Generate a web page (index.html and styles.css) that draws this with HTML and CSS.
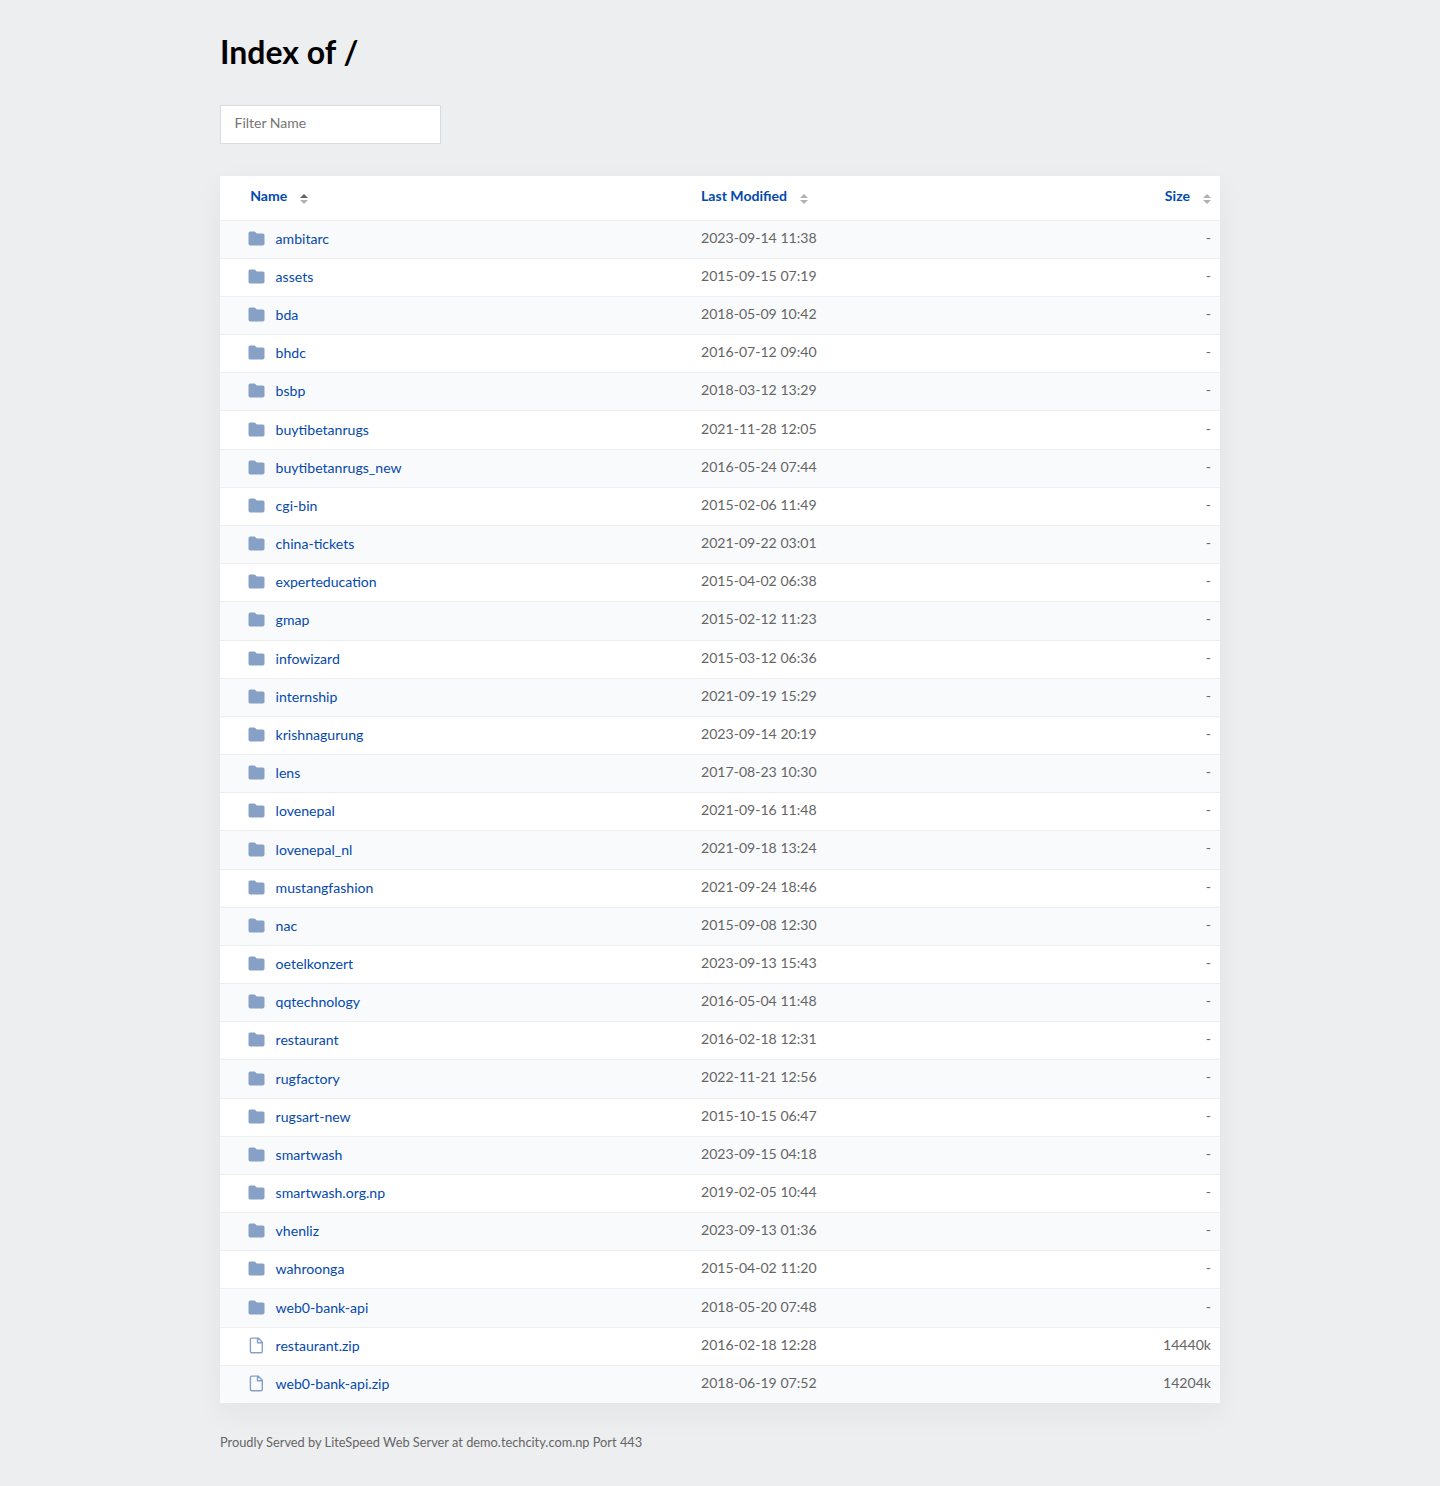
FILE: index.html
```html
<!DOCTYPE html>
<html lang="en">
<head>
<meta charset="utf-8">
<title>Index of /</title>
<link rel="stylesheet" href="styles.css">
</head>
<body>
<svg class="sprite" width="0" height="0" aria-hidden="true">
  <symbol id="folder" viewBox="0 -.4 17 17"><path d="M2.2 1h4.1q.6 0 1 .5l.9 1.1q.3.4.9.4h5.700q1.700 0 1.700 1.700v8.600q0 1.700-1.700 1.700H2.200Q.5 15 .5 13.300V2.700Q.5 1 2.200 1z" fill="#86a0c6"/></symbol>
  <symbol id="file" viewBox="0 -.4 17 17"><path d="M3.900.7h6.300l4.100 4.100v9q0 1.500-1.500 1.500H3.900q-1.500 0-1.500-1.500V2.200Q2.400.7 3.900.7zM9.500.9v4.500h4.600" fill="none" stroke="#86a0c6" stroke-width="1.400" stroke-linejoin="round"/></symbol>
  <symbol id="sort" viewBox="0 0 8 10"><path d="M0 4 4 0l4 4z"/><path d="M0 6h8l-4 4z"/></symbol>
  <symbol id="sort-asc" viewBox="0 0 8 10"><path d="M0 4 4 0l4 4z" fill="#636363"/><path d="M0 6h8l-4 4z" fill="#b1b1b1"/></symbol>
</svg>
<main class="content">
  <h1>Index of /</h1>
  <input class="filter" type="text" placeholder="Filter Name" aria-label="Filter Name">
  <table class="listing">
    <thead>
      <tr><th class="name">Name<svg class="sort"><use href="#sort-asc"/></svg></th><th class="date">Last Modified<svg class="sort"><use href="#sort"/></svg></th><th class="size">Size<svg class="sort"><use href="#sort"/></svg></th></tr>
    </thead>
    <tbody>
      <tr><td class="name"><svg class="icon"><use href="#folder"/></svg><a>ambitarc</a></td><td>2023-09-14 11:38</td><td class="size">-</td></tr>
      <tr><td class="name"><svg class="icon"><use href="#folder"/></svg><a>assets</a></td><td>2015-09-15 07:19</td><td class="size">-</td></tr>
      <tr><td class="name"><svg class="icon"><use href="#folder"/></svg><a>bda</a></td><td>2018-05-09 10:42</td><td class="size">-</td></tr>
      <tr><td class="name"><svg class="icon"><use href="#folder"/></svg><a>bhdc</a></td><td>2016-07-12 09:40</td><td class="size">-</td></tr>
      <tr><td class="name"><svg class="icon"><use href="#folder"/></svg><a>bsbp</a></td><td>2018-03-12 13:29</td><td class="size">-</td></tr>
      <tr><td class="name"><svg class="icon"><use href="#folder"/></svg><a>buytibetanrugs</a></td><td>2021-11-28 12:05</td><td class="size">-</td></tr>
      <tr><td class="name"><svg class="icon"><use href="#folder"/></svg><a>buytibetanrugs_new</a></td><td>2016-05-24 07:44</td><td class="size">-</td></tr>
      <tr><td class="name"><svg class="icon"><use href="#folder"/></svg><a>cgi-bin</a></td><td>2015-02-06 11:49</td><td class="size">-</td></tr>
      <tr><td class="name"><svg class="icon"><use href="#folder"/></svg><a>china-tickets</a></td><td>2021-09-22 03:01</td><td class="size">-</td></tr>
      <tr><td class="name"><svg class="icon"><use href="#folder"/></svg><a>experteducation</a></td><td>2015-04-02 06:38</td><td class="size">-</td></tr>
      <tr><td class="name"><svg class="icon"><use href="#folder"/></svg><a>gmap</a></td><td>2015-02-12 11:23</td><td class="size">-</td></tr>
      <tr><td class="name"><svg class="icon"><use href="#folder"/></svg><a>infowizard</a></td><td>2015-03-12 06:36</td><td class="size">-</td></tr>
      <tr><td class="name"><svg class="icon"><use href="#folder"/></svg><a>internship</a></td><td>2021-09-19 15:29</td><td class="size">-</td></tr>
      <tr><td class="name"><svg class="icon"><use href="#folder"/></svg><a>krishnagurung</a></td><td>2023-09-14 20:19</td><td class="size">-</td></tr>
      <tr><td class="name"><svg class="icon"><use href="#folder"/></svg><a>lens</a></td><td>2017-08-23 10:30</td><td class="size">-</td></tr>
      <tr><td class="name"><svg class="icon"><use href="#folder"/></svg><a>lovenepal</a></td><td>2021-09-16 11:48</td><td class="size">-</td></tr>
      <tr><td class="name"><svg class="icon"><use href="#folder"/></svg><a>lovenepal_nl</a></td><td>2021-09-18 13:24</td><td class="size">-</td></tr>
      <tr><td class="name"><svg class="icon"><use href="#folder"/></svg><a>mustangfashion</a></td><td>2021-09-24 18:46</td><td class="size">-</td></tr>
      <tr><td class="name"><svg class="icon"><use href="#folder"/></svg><a>nac</a></td><td>2015-09-08 12:30</td><td class="size">-</td></tr>
      <tr><td class="name"><svg class="icon"><use href="#folder"/></svg><a>oetelkonzert</a></td><td>2023-09-13 15:43</td><td class="size">-</td></tr>
      <tr><td class="name"><svg class="icon"><use href="#folder"/></svg><a>qqtechnology</a></td><td>2016-05-04 11:48</td><td class="size">-</td></tr>
      <tr><td class="name"><svg class="icon"><use href="#folder"/></svg><a>restaurant</a></td><td>2016-02-18 12:31</td><td class="size">-</td></tr>
      <tr><td class="name"><svg class="icon"><use href="#folder"/></svg><a>rugfactory</a></td><td>2022-11-21 12:56</td><td class="size">-</td></tr>
      <tr><td class="name"><svg class="icon"><use href="#folder"/></svg><a>rugsart-new</a></td><td>2015-10-15 06:47</td><td class="size">-</td></tr>
      <tr><td class="name"><svg class="icon"><use href="#folder"/></svg><a>smartwash</a></td><td>2023-09-15 04:18</td><td class="size">-</td></tr>
      <tr><td class="name"><svg class="icon"><use href="#folder"/></svg><a>smartwash.org.np</a></td><td>2019-02-05 10:44</td><td class="size">-</td></tr>
      <tr><td class="name"><svg class="icon"><use href="#folder"/></svg><a>vhenliz</a></td><td>2023-09-13 01:36</td><td class="size">-</td></tr>
      <tr><td class="name"><svg class="icon"><use href="#folder"/></svg><a>wahroonga</a></td><td>2015-04-02 11:20</td><td class="size">-</td></tr>
      <tr><td class="name"><svg class="icon"><use href="#folder"/></svg><a>web0-bank-api</a></td><td>2018-05-20 07:48</td><td class="size">-</td></tr>
      <tr><td class="name"><svg class="icon"><use href="#file"/></svg><a>restaurant.zip</a></td><td>2016-02-18 12:28</td><td class="size">14440k</td></tr>
      <tr><td class="name"><svg class="icon"><use href="#file"/></svg><a>web0-bank-api.zip</a></td><td>2018-06-19 07:52</td><td class="size">14204k</td></tr>
    </tbody>
  </table>
  <footer>Proudly Served by LiteSpeed Web Server at demo.techcity.com.np Port 443</footer>
</main>
</body>
</html>
```

FILE: styles.css
```css
* { box-sizing: border-box; }
body {
  margin: 0;
  background: #edeef0;
  color: #656565;
  font: 14.08px/20px Lato, "Liberation Sans", sans-serif;
}
.sprite { display: block; height: 0; }
.content {
  width: 1000px;
  min-height: 1486px;
  margin: 0 auto;
  padding-top: 32px;
}
h1 {
  margin: 0 0 33px;
  color: #000;
  font-size: 32px;
  line-height: 40px;
  font-weight: 700;
}
.filter {
  display: block;
  width: 221px;
  height: 39px;
  margin: 0 0 31.625px;
  padding: 7px 13.5px 12px;
  border: 1px solid #d9dbde;
  background: #fff;
  font: inherit;
  font-size: 14px;
}
.filter::placeholder { color: #757575; opacity: 1; }
.listing {
  width: 100%;
  table-layout: fixed;
  border-collapse: separate;
  border-spacing: 0;
  background: #fff;
  box-shadow: 0 10px 28px 0 rgba(0, 43, 43, .05);
}
th {
  height: 44px;
  padding: 10px 9px 13px 0;
  color: #0549ad;
  text-align: left;
  vertical-align: top;
}
th.name { width: 481px; padding-left: 30.2px; }
th.date { width: 300px; }
td {
  height: 38.172px;
  padding: 7.07px 9px 8px 0;
  border-top: 1px solid #eceef0;
  vertical-align: top;
}
tbody tr:nth-child(odd) { background: #f9fafc; }
td.name { padding: 8.14px 0 7px 28px; color: #0549ad; }
.size { text-align: right; }
.icon {
  float: left;
  width: 17px;
  height: 17px;
  margin: 1px 10.6px 0 0;
}
.sort {
  width: 8px;
  height: 10px;
  margin-left: 13px;
  vertical-align: -3px;
  fill: #b1b1b1;
}
footer {
  margin-top: 30px;
  font-size: 12.800px;
  line-height: 18px;
}
```
